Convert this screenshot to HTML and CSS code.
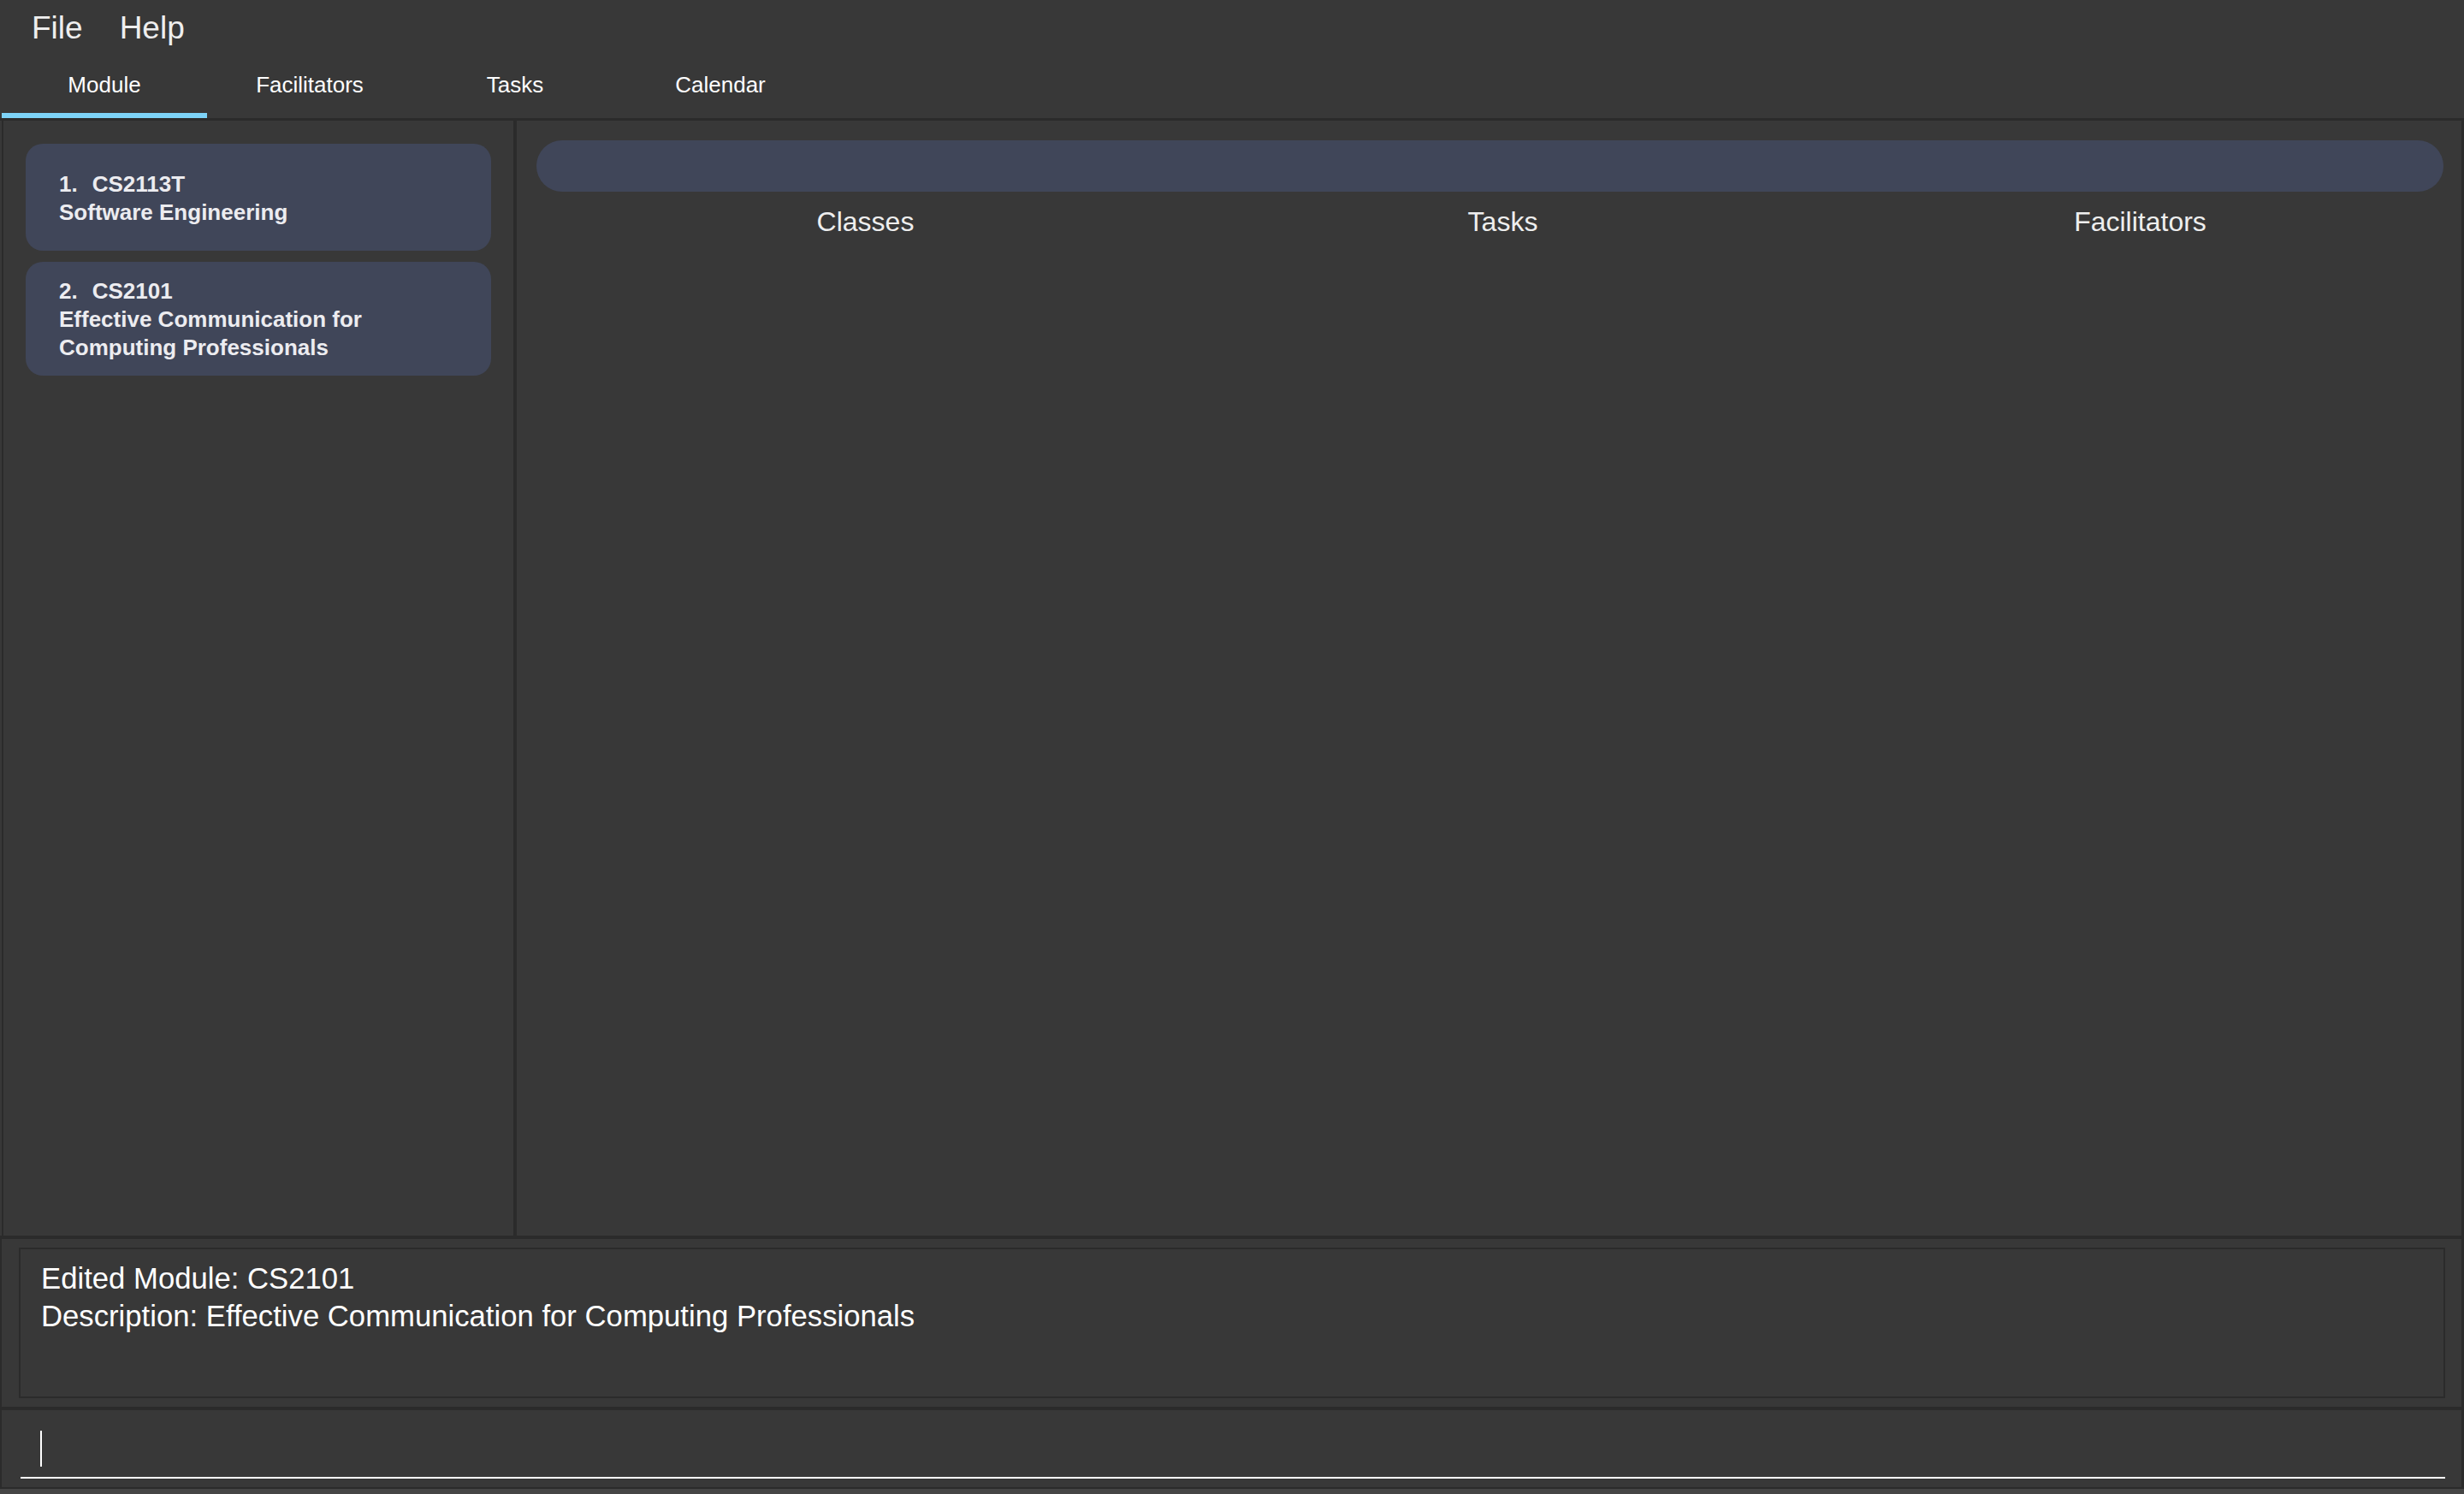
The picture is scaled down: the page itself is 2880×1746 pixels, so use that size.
FILE: index.html
```html
<!DOCTYPE html>
<html lang="en">
<head>
<meta charset="utf-8">
<title>Modules</title>
<link rel="stylesheet" href="styles.css">
</head>
<body>
<div class="app">
  <div class="menubar">
    <span class="menu">File</span>
    <span class="menu">Help</span>
  </div>
  <div class="tabs">
    <div class="tab active">Module</div>
    <div class="tab">Facilitators</div>
    <div class="tab">Tasks</div>
    <div class="tab">Calendar</div>
  </div>
  <div class="main">
    <div class="left">
      <div class="card">
        <div class="card-line"><span class="card-id">1.</span><span class="card-code">CS2113T</span></div>
        <div class="card-line">Software Engineering</div>
      </div>
      <div class="card">
        <div class="card-line"><span class="card-id">2.</span><span class="card-code">CS2101</span></div>
        <div class="card-line">Effective Communication for Computing Professionals</div>
      </div>
    </div>
    <div class="right">
      <div class="pill"></div>
      <div class="columns">
        <div class="col-head">Classes</div>
        <div class="col-head">Tasks</div>
        <div class="col-head">Facilitators</div>
      </div>
    </div>
  </div>
  <div class="result">
    <div class="result-box">
      <div class="result-line">Edited Module: CS2101</div>
      <div class="result-line">Description: Effective Communication for Computing Professionals</div>
    </div>
  </div>
  <div class="command">
    <div class="cmd-field"><span class="caret"></span></div>
  </div>
  <div class="statusbar"></div>
</div>
</body>
</html>
```

FILE: styles.css
```css
html, body {
  margin: 0;
  padding: 0;
}
body {
  background: #383838;
  font-family: "Liberation Sans", Arial, sans-serif;
  color: #ffffff;
}
.app {
  width: 2880px;
  height: 1746px;
  display: flex;
  flex-direction: column;
  background: #383838;
  overflow: hidden;
}
.menubar {
  height: 66px;
  box-sizing: border-box;
  padding: 11px 0 0 37px;
  display: flex;
  gap: 43px;
}
.menu {
  font-size: 37px;
  line-height: 44px;
  color: #eeeeee;
}
.tabs {
  height: 72px;
  display: flex;
  padding-left: 2px;
}
.tab {
  width: 240px;
  box-sizing: border-box;
  padding-top: 18px;
  text-align: center;
  font-size: 26px;
  line-height: 30px;
  color: #ffffff;
  border-bottom: 6px solid transparent;
}
.tab.active {
  border-bottom-color: #7dd3f8;
}
.main {
  height: 1310px;
  box-sizing: border-box;
  border-top: 3px solid #2b2b2b;
  border-bottom: 4px solid #2b2b2b;
  display: flex;
}
.left {
  box-sizing: border-box;
  margin-left: 2px;
  width: 602px;
  border-left: 2px solid #2b2b2b;
  border-right: 4px solid #2b2b2b;
  padding: 27px 26px 0 26px;
  display: flex;
  flex-direction: column;
  gap: 13px;
}
.card {
  background: #404659;
  border-radius: 20px;
  min-height: 125px;
  box-sizing: border-box;
  padding: 18px 38px 16px 39px;
  display: flex;
  flex-direction: column;
  justify-content: center;
  font-weight: bold;
  font-size: 26px;
  line-height: 33px;
  color: #ececf0;
}
.card-code {
  margin-left: 17px;
}
.right {
  flex: 1;
  border-right: 3px solid #2b2b2b;
  padding: 23px 21px 0 23px;
}
.pill {
  height: 60px;
  border-radius: 30px;
  background: #404659;
}
.columns {
  margin: 17px -18px 0 12px;
  display: grid;
  grid-template-columns: 1fr 1fr 1fr;
}
.col-head {
  text-align: center;
  font-size: 32px;
  line-height: 37px;
  color: #eeeeee;
}
.result {
  height: 200px;
  box-sizing: border-box;
  border-left: 2px solid #2b2b2b;
  border-right: 3px solid #2b2b2b;
  border-bottom: 4px solid #2b2b2b;
  padding: 10px 19px 10px 20px;
}
.result-box {
  height: 100%;
  box-sizing: border-box;
  border: 2px solid #2b2b2b;
  padding: 12px 24px 0 24px;
}
.result-line {
  font-size: 34.7px;
  line-height: 44px;
  color: #ffffff;
}
.command {
  height: 92px;
  box-sizing: border-box;
  border-left: 2px solid #2b2b2b;
  border-right: 3px solid #2b2b2b;
  border-bottom: 2px solid #2b2b2b;
  padding: 12px 19px 10px 22px;
}
.cmd-field {
  height: 68px;
  box-sizing: border-box;
  border-bottom: 2px solid #ffffff;
  padding: 12px 0 0 23px;
}
.caret {
  display: block;
  width: 2px;
  height: 42px;
  background: #ffffff;
}
.statusbar {
  flex: 1;
  background: #454545;
}
```
